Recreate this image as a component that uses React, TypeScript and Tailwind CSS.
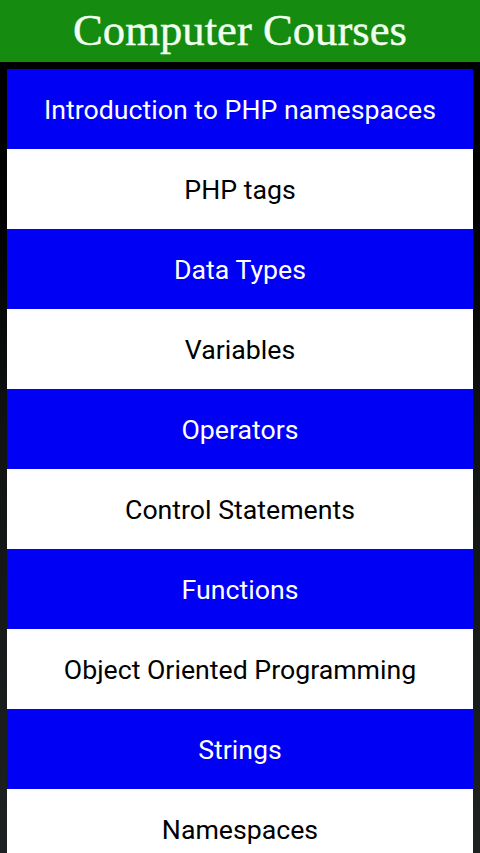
import React from "react";

const items = [
  "Introduction to PHP namespaces",
  "PHP tags",
  "Data Types",
  "Variables",
  "Operators",
  "Control Statements",
  "Functions",
  "Object Oriented Programming",
  "Strings",
  "Namespaces",
];

export default function App() {
  return (
    <div className="w-[480px] h-[853px] overflow-hidden bg-gradient-to-b from-black via-[#111313] to-[#1e2121]">
      <div className="h-[62px] bg-[#158c0f] flex items-center justify-center">
        <span className="text-[44.7px] leading-none text-[#f0fff0] font-['Liberation_Serif',serif] -mt-[2px] [-webkit-text-stroke:0.4px_#f0fff0]">
          Computer Courses
        </span>
      </div>
      <div className="pt-[7px] px-[7px]">
        {items.map((t, i) => (
          <div
            key={t}
            className={`h-[80px] pt-[3px] flex items-center justify-center text-[26.7px] font-['Roboto',sans-serif] ${
              i % 2 === 0 ? "bg-[#0000f5] text-white" : "bg-white text-black"
            }`}
          >
            {t}
          </div>
        ))}
      </div>
    </div>
  );
}
